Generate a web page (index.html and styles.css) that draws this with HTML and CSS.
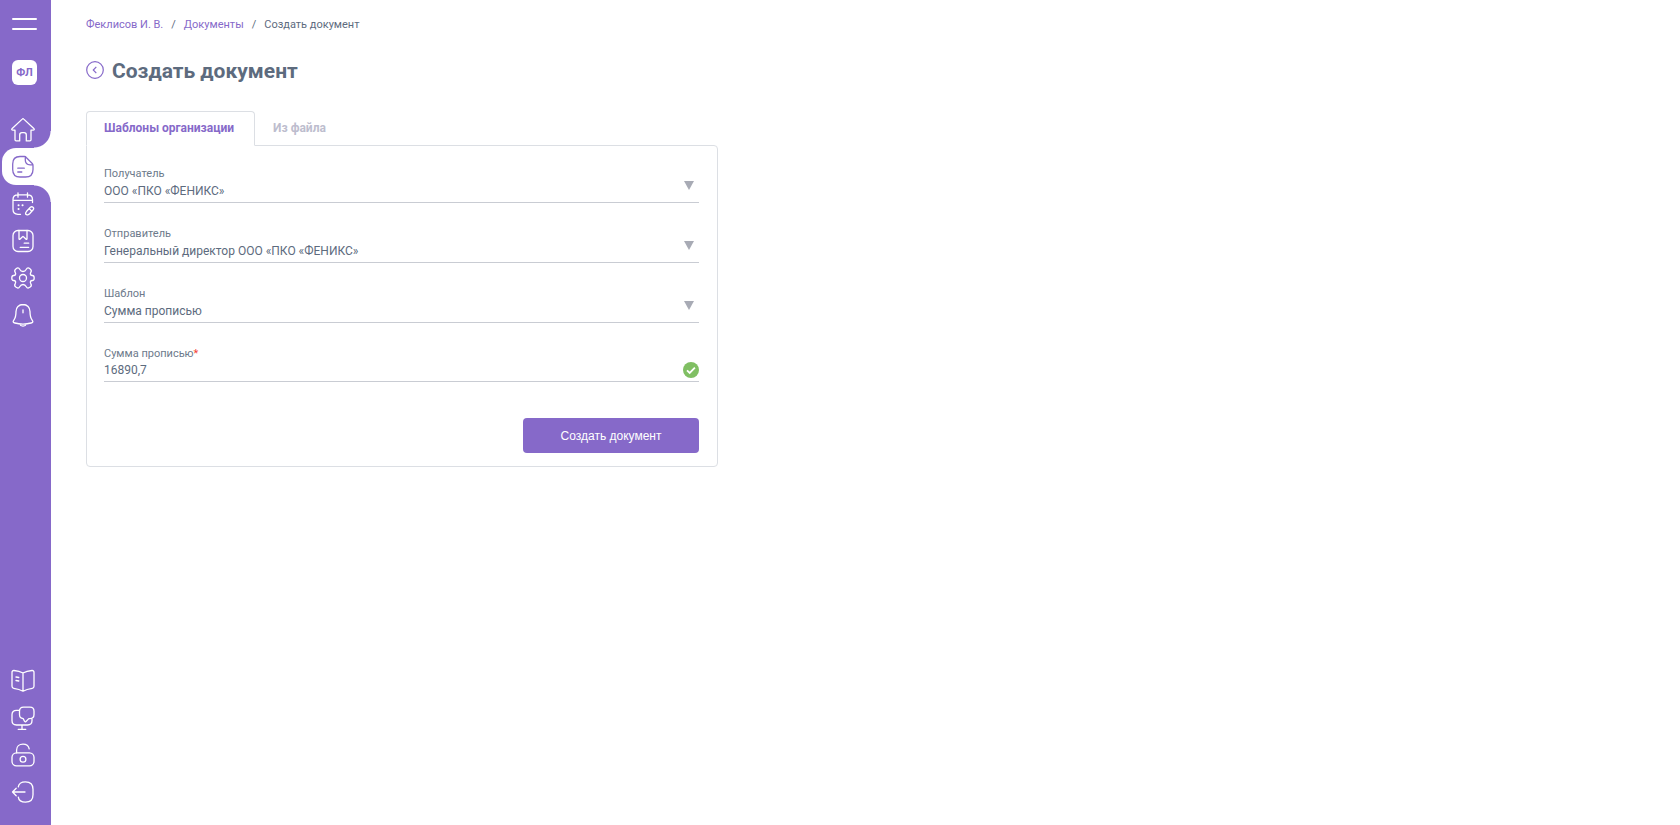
FILE: index.html
```html
<!DOCTYPE html>
<html lang="ru">
<head>
  <meta charset="UTF-8">
  <meta name="viewport" content="width=device-width, initial-scale=1.0">
  <title>Создать документ</title>
  <link rel="stylesheet" href="styles.css">
</head>
<body>
  <aside class="sidebar">
    <button class="menu-btn" type="button" aria-label="Меню"><span></span><span></span></button>
    <a class="avatar" href="#">ФЛ</a>

    <nav class="nav" aria-label="Основное меню">
      <a class="nav-item" href="#" aria-label="Главная">
        <svg viewBox="0 0 24 24"><path d="M4 12.200v9.600c0 .7.4 1.100 1.100 1.100h3.600v-6a2.200 2.200 0 0 1 2.200-2.200h2.200a2.200 2.200 0 0 1 2.200 2.200v6h3.600c.7 0 1.100-.4 1.100-1.100v-9.600h2.100c1.300 0 1.500-.9.7-1.700L12.800 1.100a1.100 1.100 0 0 0-1.600 0L1.200 10.500c-.8.8-.6 1.700.7 1.700z"/></svg>
      </a>
      <a class="nav-item active" href="#" aria-label="Документы">
        <svg viewBox="0 0 24 24"><path d="M13.500 1.500H9C4 1.500 1.700 4 1.700 9v5.500c0 5 2.300 7.500 7.300 7.500h5.500c5 0 7.500-2.500 7.500-7.500v-4c0-1-.2-1.500-1-2.300l-5.500-5.500c-.7-.8-1.200-1.200-2-1.200zM14.300 1.800V5c0 3.200 1.500 4.800 4.800 4.800H22M6.800 13.200h6.500M6.800 17h4"/></svg>
      </a>
      <a class="nav-item" href="#" aria-label="Календарь">
        <svg viewBox="0 0 24 24"><path d="M7 .8v4.400M16.500 .8v4.400M2 8.300h19.500M9.500 22.300H7c-3.500 0-5-1.500-5-5V7.600c0-3.300 1.500-4.700 5-4.700h9.500c3.500 0 5 1.400 5 4.700v3M14.800 22.300c-.6-1 .2-2.300.8-3l3.800-4c1.800-1.500 4.200.6 2.800 2.500l-3.600 4c-1 1-2.800 1.500-3.800.5zM18.200 16.700l2.500 2.300"/><path class="dots" d="M7.500 13.200h.1M11.500 13.200h.1M7.500 17h.1"/></svg>
      </a>
      <a class="nav-item" href="#" aria-label="Шаблоны">
        <svg viewBox="0 0 24 24"><rect x="2" y="1.500" width="20" height="21" rx="5"/><path d="M8 1.500v8.300c0 .6.5.8.900.4l2.600-2.400c.3-.3.700-.3 1 0l2.600 2.400c.4.4.9.200.9-.4V1.500M13.200 14.200h4.500M9.200 18.300h8.500"/></svg>
      </a>
      <a class="nav-item" href="#" aria-label="Настройки">
        <svg viewBox="0 0 24 24"><circle cx="12" cy="12" r="3.500"/><path d="M8.700 3.300C7.700 1.300 6.300 1.800 4.800 2.900c-1.300 1-1.500 2-.6 3.500C5.200 8.300 4.500 9.500 2.600 9.500 1.200 9.500.8 10.500.8 12s.4 2.500 1.800 2.500c1.900 0 2.600 1.200 1.600 3.100-.9 1.500-.7 2.500.6 3.500 1.500 1.100 2.900 1.600 3.900-.4.9-1.700 1.700-2.200 3.300-2.200s2.400.5 3.300 2.200c1 2 2.400 1.500 3.900.4 1.300-1 1.500-2 .6-3.500-1-1.900-.3-3.100 1.600-3.100 1.400 0 1.800-1 1.800-2.500s-.4-2.500-1.800-2.500c-1.900 0-2.600-1.200-1.600-3.100.9-1.500.7-2.500-.6-3.500-1.500-1.100-2.900-1.600-3.900.4-.9 1.700-1.700 2.200-3.300 2.200s-2.400-.5-3.300-2.200z"/></svg>
      </a>
      <a class="nav-item" href="#" aria-label="Уведомления">
        <svg viewBox="0 0 24 24"><path d="M12 1.500c-4.200 0-7 3.100-7 7.100 0 3.800-.3 6-2 8.300-1.300 1.700-1.200 2.600.8 3.100 5.300 1.400 11.100 1.400 16.400 0 2-.5 2.100-1.400.8-3.100-1.700-2.300-2-4.500-2-8.300 0-4-2.800-7.100-7-7.100zM8.800 20.900c.6 1.600 1.700 2.300 3.200 2.300s2.600-.7 3.200-2.300M12 6.800v3"/></svg>
      </a>
    </nav>

    <nav class="nav nav-bottom" aria-label="Дополнительно">
      <a class="nav-item" href="#" aria-label="Справка">
        <svg viewBox="0 0 24 24"><path d="M12 4v18.200M12 4C9.500 2.600 6.300 1.800 3 1.500c-1.300-.1-2 .6-2 1.900v13.800c0 1.200.6 1.900 1.800 2.100 3.300.5 6.500 1.400 9.200 2.900 2.700-1.500 5.900-2.400 9.200-2.900 1.200-.2 1.800-.9 1.800-2.100V3.400c0-1.300-.7-2-2-1.900-3.300.3-6.500 1.100-9 2.500zM5 8l2.800.5M5 11.500l2.800.5"/></svg>
      </a>
      <a class="nav-item" href="#" aria-label="Поддержка">
        <svg viewBox="0 0 24 24"><path d="M8 4.300H5.500C2.500 4.300 1 5.800 1 8.800v5.700C1 17.500 2.500 19 5.500 19h11c3 0 4.500-1.500 4.500-4.500v-1.700M11 19v4.200M7.200 23.300h7.600M12.500 1.200h6.500c2.700 0 4 1.300 4 4v3.400c0 2.700-1.300 4-4 4h-1.200l-2.800 2.900c-.5.500-1.200.4-1.500-.2l-1.300-2.700c-2.500-.1-3.700-1.400-3.700-4V5.200c0-2.700 1.300-4 4-4z"/></svg>
      </a>
      <a class="nav-item" href="#" aria-label="Доступ">
        <svg viewBox="0 0 24 24"><rect x="1" y="9.800" width="22" height="13" rx="4.500"/><circle cx="12" cy="16.200" r="2.900"/><path d="M5.600 9.800V7c0-3.500 2.700-5.900 6.400-5.900 3.300 0 5.600 1.800 6.200 4.700"/></svg>
      </a>
      <a class="nav-item" href="#" aria-label="Выход">
        <svg viewBox="0 0 24 24"><path d="M1.500 12h12.500M5.200 8.200L1.500 12l3.700 3.800M7.300 6.800C7.800 3.200 10 1.800 14.500 1.800c5.500 0 7.500 2.200 7.500 7.400v5.600c0 5.200-2 7.400-7.500 7.400-4.500 0-6.700-1.400-7.200-5"/></svg>
      </a>
    </nav>
  </aside>

  <main class="content">
    <nav class="breadcrumbs" aria-label="Навигация">
      <a href="#">Феклисов И. В.</a>
      <span>/</span>
      <a href="#">Документы</a>
      <span>/</span>
      <span>Создать документ</span>
    </nav>

    <div class="page-title">
      <a class="back" href="#" aria-label="Назад">
        <svg viewBox="0 0 18 18"><circle cx="9" cy="9" r="8.300"/><path d="M10.300 5.900L7.300 9l3 3.100"/></svg>
      </a>
      <h1>Создать документ</h1>
    </div>

    <div class="tabs" role="tablist">
      <button class="tab tab-active" type="button" role="tab" aria-selected="true">Шаблоны организации</button>
      <button class="tab" type="button" role="tab" aria-selected="false">Из файла</button>
    </div>

    <form class="card">
      <div class="field">
        <label for="recipient">Получатель</label>
        <select id="recipient">
          <option>ООО «ПКО «ФЕНИКС»</option>
        </select>
        <svg class="arrow" viewBox="0 0 10 9"><path d="M0 0h10L5 9z"/></svg>
      </div>
      <div class="field">
        <label for="sender">Отправитель</label>
        <select id="sender">
          <option>Генеральный директор ООО «ПКО «ФЕНИКС»</option>
        </select>
        <svg class="arrow" viewBox="0 0 10 9"><path d="M0 0h10L5 9z"/></svg>
      </div>
      <div class="field">
        <label for="template">Шаблон</label>
        <select id="template">
          <option>Сумма прописью</option>
        </select>
        <svg class="arrow" viewBox="0 0 10 9"><path d="M0 0h10L5 9z"/></svg>
      </div>
      <div class="field">
        <label for="amount">Сумма прописью<span class="required">*</span></label>
        <input type="text" id="amount" value="16890,7">
        <svg class="valid" viewBox="0 0 16 16"><circle cx="8" cy="8" r="8"/><path d="M4 8.300l2.700 2.600 5.200-5.300"/></svg>
      </div>
      <button class="submit-btn" type="button">Создать документ</button>
    </form>
  </main>
</body>
</html>
```
FILE: styles.css
```css
* {
  box-sizing: border-box;
}

body {
  margin: 0;
  display: flex;
  min-height: 100vh;
  background: #fff;
  color: #5d6b7e;
  font-family: Roboto, "Liberation Sans", sans-serif;
  font-size: 12px;
}

a {
  color: #8669c9;
  text-decoration: none;
}

button,
input,
select {
  font-family: inherit;
  color: inherit;
}

/* Sidebar */
.sidebar {
  width: 51px;
  flex-shrink: 0;
  display: flex;
  flex-direction: column;
  padding: 18px 0 15px;
  background: #8669c9;
}

.menu-btn {
  display: flex;
  flex-direction: column;
  gap: 8px;
  width: 25px;
  margin-left: 12px;
  padding: 0;
  border: none;
  background: none;
  cursor: pointer;
}

.menu-btn span {
  width: 25px;
  height: 2px;
  border-radius: 1px;
  background: #fff;
}

.avatar {
  display: flex;
  align-items: center;
  justify-content: center;
  width: 25px;
  height: 25px;
  margin: 30px 0 26px 12px;
  border-radius: 6px;
  background: #fff;
  font-size: 11px;
  font-weight: 700;
}

.nav {
  display: flex;
  flex-direction: column;
}

.nav-bottom {
  margin-top: auto;
}

.nav-item {
  display: flex;
  align-items: center;
  height: 37px;
  margin-left: 2px;
  padding-left: 9px;
  color: #fff;
}

.nav-item svg {
  width: 24px;
  height: 24px;
  fill: none;
  stroke: currentColor;
  stroke-width: 1.3;
  stroke-linecap: round;
  stroke-linejoin: round;
}

.nav-item .dots {
  stroke-width: 2;
}

.active {
  position: relative;
  border-radius: 14px 0 0 14px;
  background: #fff;
  color: #8669c9;
}

/* rounded purple corners above and below the active item */
.active::before,
.active::after {
  content: "";
  position: absolute;
  right: 0;
  width: 17px;
  height: 17px;
}

.active::before {
  bottom: 100%;
  background: radial-gradient(circle at 0 0, transparent 16px, #fff 17px);
}

.active::after {
  top: 100%;
  background: radial-gradient(circle at 0 100%, transparent 16px, #fff 17px);
}

/* Content */
.content {
  flex: 1;
  max-width: 702px;
  padding: 17px 35px;
}

.breadcrumbs {
  display: flex;
  gap: 8px;
  font-size: 11px;
  line-height: 16px;
}

.page-title {
  display: flex;
  align-items: center;
  gap: 8px;
  margin: 23px 0 25px;
}

.back {
  padding-bottom: 2px;
}

.back svg {
  display: block;
  width: 18px;
  height: 18px;
  fill: none;
  stroke: #8669c9;
  stroke-width: 1.2;
}

h1 {
  margin: 0;
  font-size: 21px;
  line-height: 30px;
}

.tabs {
  display: flex;
}

.tab {
  height: 35px;
  margin-bottom: -1px;
  padding: 0 20px 2px 17px;
  border: 1px solid transparent;
  background: none;
  color: #bdbdce;
  font-size: 12px;
  font-weight: 700;
  cursor: pointer;
}

.tab-active {
  position: relative;
  border-color: #dcdfe4;
  border-bottom-color: #fff;
  border-radius: 4px 4px 0 0;
  background: #fff;
  color: #8669c9;
}

.card {
  display: flex;
  flex-direction: column;
  gap: 22px;
  padding: 19px 18px 13px 17px;
  border: 1px solid #dcdfe4;
  border-radius: 0 4px 4px 4px;
}

.field {
  position: relative;
  display: flex;
  flex-direction: column;
}

.field label {
  color: #6d7a8b;
  font-size: 11px;
  line-height: 17px;
}

.field select,
.field input {
  appearance: none;
  height: 21px;
  margin: 0;
  padding: 0 24px 3px 0;
  border: none;
  border-bottom: 1px solid #c9ccd3;
  border-radius: 0;
  background: none;
  font-size: 12px;
  outline: none;
}

.field input {
  height: 20px;
}

.arrow {
  position: absolute;
  right: 5px;
  bottom: 13px;
  width: 10px;
  height: 9px;
  fill: #a8abb5;
  pointer-events: none;
}

.valid {
  position: absolute;
  right: 0;
  bottom: 4px;
  width: 16px;
  height: 16px;
  fill: #80bf63;
}

.valid path {
  fill: none;
  stroke: #fff;
  stroke-width: 1.8;
}

.required {
  color: #f44336;
}

.submit-btn {
  align-self: flex-end;
  width: 176px;
  height: 35px;
  margin-top: 14px;
  border: none;
  border-radius: 4px;
  background: #8669c9;
  color: #fff;
  font-family: "Liberation Sans", sans-serif;
  font-size: 12px;
  cursor: pointer;
}
```
